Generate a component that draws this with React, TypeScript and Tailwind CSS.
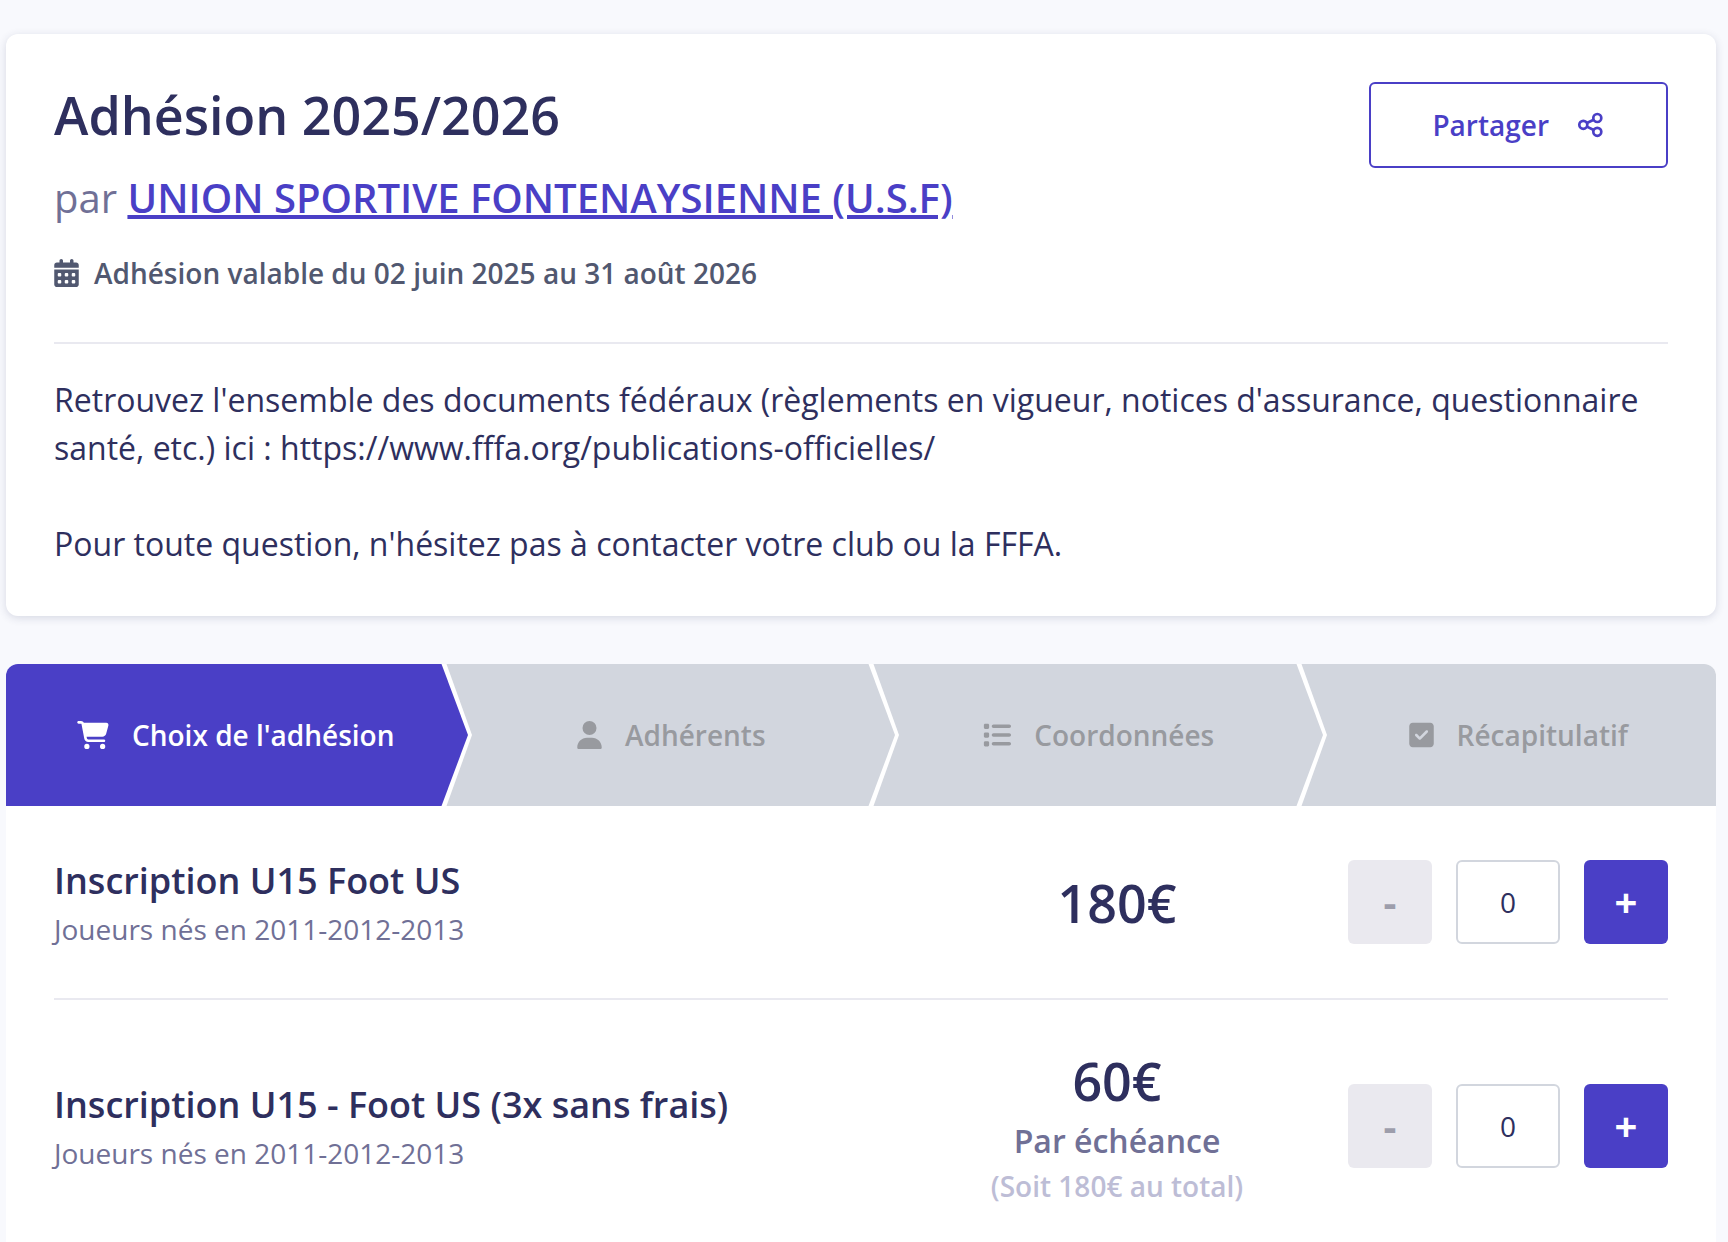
import React, { useState } from 'react'
import { FaCalendarDays, FaCartShopping, FaList, FaSquareCheck, FaUser } from 'react-icons/fa6'

const steps = [
  { label: "Choix de l'adhésion", icon: FaCartShopping, iconClass: 'h-7 w-8' },
  { label: 'Adhérents', icon: FaUser, iconClass: 'h-7 w-[25px]' },
  { label: 'Coordonnées', icon: FaList, iconClass: 'size-7' },
  { label: 'Récapitulatif', icon: FaSquareCheck, iconClass: 'h-7 w-[25px]' },
]

const tiers = [
  { id: 'u15', name: 'Inscription U15 Foot US', detail: 'Joueurs nés en 2011-2012-2013', price: '180€' },
  {
    id: 'u15-3x',
    name: 'Inscription U15 - Foot US (3x sans frais)',
    detail: 'Joueurs nés en 2011-2012-2013',
    price: '60€',
    period: 'Par échéance',
    total: '(Soit 180€ au total)',
  },
]

const ShareIcon = () => (
  <svg className="h-[26px] w-7" viewBox="0 0 28 26" fill="none" stroke="currentColor" strokeWidth="2.7" aria-hidden="true">
    <circle cx="6.3" cy="12.8" r="4" />
    <circle cx="20.3" cy="6" r="4" />
    <circle cx="20.3" cy="19.8" r="4" />
    <path d="M9.9 11l6.8-3.3M9.900 14.600l6.8 3.400" />
  </svg>
)

const Header = () => (
  <section className="rounded-xl bg-white p-12 shadow-[0_2px_8px_rgba(46,47,94,0.16)]">
    <div className="flex items-start justify-between border-b-2 border-[#e9e9f0] pb-12">
      <div>
        <h1 className="text-[52px] leading-[65px] font-semibold">Adhésion 2025/2026</h1>
        <p className="mt-[21px] text-[40px] leading-[60px] text-[#707096]">
          par{' '}
          <a href="#club" className="font-semibold text-[#4a3fc6] underline decoration-4 underline-offset-2">
            UNION SPORTIVE FONTENAYSIENNE (U.S.F)
          </a>
        </p>
        <p className="mt-6 flex items-center gap-[15px] text-[28px] leading-[42px] font-semibold text-[#515870]">
          <FaCalendarDays className="h-7 w-[25px]" />
          Adhésion valable du 02 juin 2025 au 31 août 2026
        </p>
      </div>
      <button
        type="button"
        className="flex h-[86px] items-center gap-7 rounded-md border-2 border-[#4a3fc6] px-[61px] text-[28px] font-semibold text-[#4a3fc6]"
      >
        Partager
        <ShareIcon />
      </button>
    </div>
    <div className="pt-8 text-[32px] leading-[48px]">
      <p>
        Retrouvez l'ensemble des documents fédéraux (règlements en vigueur, notices d'assurance, questionnaire santé,
        etc.) ici : https://www.fffa.org/publications-officielles/
      </p>
      <p className="mt-12">Pour toute question, n'hésitez pas à contacter votre club ou la FFFA.</p>
    </div>
  </section>
)

// Right-pointing edge that lies over the start of the next step
const Chevron = ({ active }: { active: boolean }) => (
  <svg className="absolute top-0 left-full z-10 h-full w-10" viewBox="0 0 40 142" preserveAspectRatio="none" aria-hidden="true">
    <path d="M0 0H12.5L38 71L12.5 142H0z" fill="#fff" />
    <path d="M-1 0H7.500L34 71L7.500 142H-1z" fill={active ? '#4a3fc6' : '#d2d6de'} />
  </svg>
)

const Stepper = () => (
  <ol className="grid h-[142px] grid-cols-4 rounded-t-xl text-[28px] font-semibold">
    {steps.map(({ label, icon: Icon, iconClass }, i) => (
      <li
        key={label}
        className={
          'relative flex items-center justify-center gap-[23px] ' +
          (i === 0
            ? 'rounded-tl-xl bg-[#4a3fc6] pl-8 text-white'
            : i === steps.length - 1
              ? 'rounded-tr-xl bg-[#d2d6de] pl-8 text-[#989a9f]'
              : 'bg-[#d2d6de] pl-12 text-[#989a9f]')
        }
      >
        <Icon className={iconClass} />
        {label}
        {i < steps.length - 1 && <Chevron active={i === 0} />}
      </li>
    ))}
  </ol>
)

const Quantity = ({ name }: { name: string }) => {
  const [count, setCount] = useState(0)

  return (
    <div className="flex gap-6">
      <button
        type="button"
        aria-label="Retirer"
        disabled={count === 0}
        onClick={() => setCount(count - 1)}
        className="size-[84px] rounded-md bg-[#4a3fc6] text-[40px] font-bold text-white disabled:bg-[#eae9ef] disabled:text-[#9d9dab]"
      >
        -
      </button>
      <input
        type="text"
        inputMode="numeric"
        aria-label={name}
        value={count}
        onChange={(e) => setCount(Number(e.target.value) || 0)}
        className="h-[84px] w-[104px] rounded-md border-2 border-[#d2d6de] text-center text-[28px]"
      />
      <button
        type="button"
        aria-label="Ajouter"
        onClick={() => setCount(count + 1)}
        className="size-[84px] rounded-md bg-[#4a3fc6] text-[40px] font-bold text-white"
      >
        +
      </button>
    </div>
  )
}

const App = () => {
  return (
    <div className="h-screen overflow-hidden bg-[#f8f9fd] pt-[34px] pr-3 pl-1.5 font-['Open_Sans',sans-serif] text-[#2e2f5e]">
      <Header />
      <main className="mt-12 rounded-xl bg-white">
        <Stepper />
        <ul className="divide-y-2 divide-[#e9e9f0] px-12">
          {tiers.map((tier) => (
            <li key={tier.id} className="flex items-center py-12">
              <div className="flex-1">
                <h2 className="text-[36px] leading-[54px] font-semibold">{tier.name}</h2>
                <p className="text-[28px] leading-[42px] text-[#707096]">{tier.detail}</p>
              </div>
              <div className="mr-12 flex w-[366px] flex-col gap-2 text-center font-semibold">
                <p className="text-[52px] leading-[65px]">{tier.price}</p>
                {tier.period && <p className="text-[32px] leading-[40px] text-[#707096]">{tier.period}</p>}
                {tier.total && <p className="text-[28px] leading-[35px] text-[#bdbdd6]">{tier.total}</p>}
              </div>
              <Quantity name={tier.name} />
            </li>
          ))}
        </ul>
        <div className="h-12" />
      </main>
    </div>
  )
}

export default App
